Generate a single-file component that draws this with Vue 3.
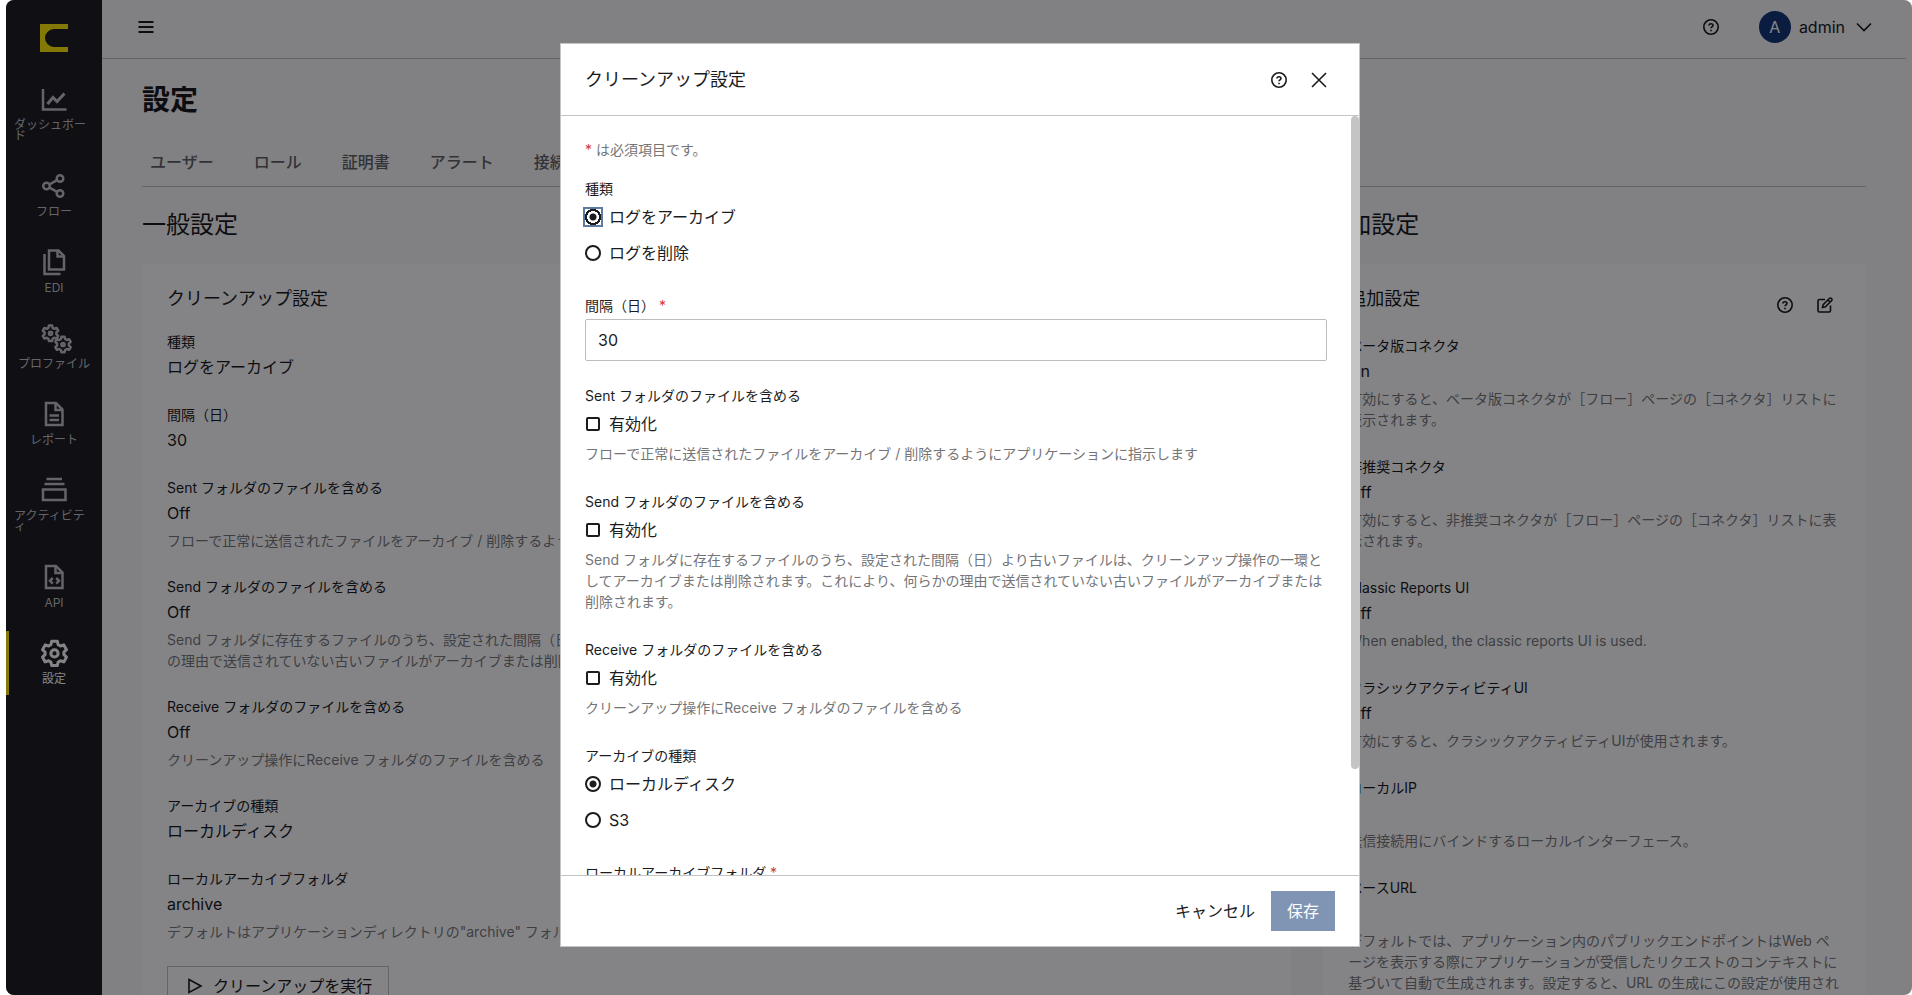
<script setup>
import { ref } from 'vue'

const navItems = [
  { id: 'dashboard', label: 'ダッシュボード' },
  { id: 'flow', label: 'フロー' },
  { id: 'edi', label: 'EDI' },
  { id: 'profile', label: 'プロファイル' },
  { id: 'report', label: 'レポート' },
  { id: 'activity', label: 'アクティビティ' },
  { id: 'api', label: 'API' },
  { id: 'settings', label: '設定', active: true }
]

const tabs = ['ユーザー', 'ロール', '証明書', 'アラート', '接続']

const cleanup = [
  { label: '種類', value: 'ログをアーカイブ' },
  { label: '間隔（日）', value: '30' },
  {
    label: 'Sent フォルダのファイルを含める',
    value: 'Off',
    desc: 'フローで正常に送信されたファイルをアーカイブ / 削除するようにアプリケーションに指示します'
  },
  {
    label: 'Send フォルダのファイルを含める',
    value: 'Off',
    desc: 'Send フォルダに存在するファイルのうち、設定された間隔（日）より古いファイルは、クリーンアップ操作の一環としてアーカイブまたは削除されます。これにより、何らかの理由で送信されていない古いファイルがアーカイブまたは削除されます。'
  },
  {
    label: 'Receive フォルダのファイルを含める',
    value: 'Off',
    desc: 'クリーンアップ操作にReceive フォルダのファイルを含める'
  },
  { label: 'アーカイブの種類', value: 'ローカルディスク' },
  {
    label: 'ローカルアーカイブフォルダ',
    value: 'archive',
    desc: 'デフォルトはアプリケーションディレクトリの"archive" フォルダです。'
  }
]

const extra = [
  {
    label: 'ベータ版コネクタ',
    value: 'On',
    desc: '有効にすると、ベータ版コネクタが［フロー］ページの［コネクタ］リストに表示されます。'
  },
  {
    label: '非推奨コネクタ',
    value: 'Off',
    desc: '有効にすると、非推奨コネクタが［フロー］ページの［コネクタ］リストに表示されます。'
  },
  { label: 'Classic Reports UI', value: 'Off', desc: 'When enabled, the classic reports UI is used.' },
  {
    label: 'クラシックアクティビティUI',
    value: 'Off',
    desc: '有効にすると、クラシックアクティビティUIが使用されます。'
  },
  { label: 'ローカルIP', value: '', desc: '送信接続用にバインドするローカルインターフェース。' },
  {
    label: 'ベースURL',
    value: '',
    desc: 'デフォルトでは、アプリケーション内のパブリックエンドポイントはWeb ページを表示する際にアプリケーションが受信したリクエストのコンテキストに基づいて自動で生成されます。設定すると、URL の生成にこの設定が使用されます。'
  }
]

const checks = [
  {
    id: 'sent',
    label: 'Sent フォルダのファイルを含める',
    desc: 'フローで正常に送信されたファイルをアーカイブ / 削除するようにアプリケーションに指示します'
  },
  {
    id: 'send',
    label: 'Send フォルダのファイルを含める',
    desc: 'Send フォルダに存在するファイルのうち、設定された間隔（日）より古いファイルは、クリーンアップ操作の一環としてアーカイブまたは削除されます。これにより、何らかの理由で送信されていない古いファイルがアーカイブまたは削除されます。'
  },
  {
    id: 'receive',
    label: 'Receive フォルダのファイルを含める',
    desc: 'クリーンアップ操作にReceive フォルダのファイルを含める'
  }
]

const enabled = ref([])
const kind = ref('archive')
const days = ref('30')
const store = ref('local')
const folder = ref('')
</script>

<template>
  <div class="frame">
    <nav class="sidebar">
      <svg class="logo" viewBox="0 0 28 28" aria-hidden="true">
        <path d="M0 0H28V5H14A9 9 0 0 0 14 23H28V28H0Z" fill="#ffe600" />
      </svg>
      <a v-for="item in navItems" :key="item.id" href="#" class="nav-item" :class="{ active: item.active }">
        <svg class="nav-icon" viewBox="0 0 28 28" fill="none" stroke="currentColor" stroke-width="2.500" aria-hidden="true">
          <template v-if="item.id === 'dashboard'">
            <path d="M3 4V24.500H26.500" />
            <path d="M7.500 19L13 12.500L17 16.500L24.500 8.500" stroke-width="3" />
          </template>
          <template v-else-if="item.id === 'flow'">
            <circle cx="6.500" cy="14" r="3.300" />
            <circle cx="20" cy="6.500" r="3.300" />
            <circle cx="20" cy="21.500" r="3.300" />
            <path d="M9.600 12.300L17 8.200M9.600 15.700L17 19.800" />
          </template>
          <template v-else-if="item.id === 'edi'">
            <path d="M9 2.500H18.500L24 8V21.500H9Z" />
            <path d="M17.500 3V8.500H23.500" />
            <path d="M4.500 6V26H20.500" />
          </template>
          <template v-else-if="item.id === 'profile'">
            <path
              d="M8.900 1.500h3.200l.5 2.300 1.700 1 2.300-.8 1.600 2.700-1.800 1.600v2l1.800 1.600-1.600 2.700-2.300-.8-1.700 1-.5 2.300H8.900l-.5-2.300-1.700-1-2.300.8-1.600-2.700 1.800-1.600v-2L2.800 6.700 4.400 4l2.300.8 1.700-1Z"
              stroke-linejoin="round"
            />
            <circle cx="10.500" cy="9.300" r="1.600" />
            <path
              d="M21.400 12.700h3.200l.5 2.300 1.700 1 2.300-.8 1.600 2.700-1.800 1.600v2l1.800 1.600-1.600 2.700-2.300-.8-1.700 1-.5 2.300h-3.200l-.5-2.300-1.700-1-2.300.8-1.600-2.700 1.800-1.600v-2l-1.800-1.600 1.600-2.700 2.300.8 1.700-1Z"
              stroke-linejoin="round"
            />
            <circle cx="23" cy="20.500" r="1.600" />
          </template>
          <template v-else-if="item.id === 'report'">
            <path d="M6 3H16L22.500 9.500V25H6Z" />
            <path d="M15.500 3V10H22.500M9.500 15.500H19M9.500 20H19" />
          </template>
          <template v-else-if="item.id === 'activity'">
            <path d="M6.500 3H22M4.500 8H24.500M3 13.500H25.500V24H3Z" />
          </template>
          <template v-else-if="item.id === 'api'">
            <path d="M6 3H16L22.500 9.500V25H6Z" />
            <path d="M15.500 3V10H22.500M12.800 15L10 17.800L12.800 20.600M16.200 15L19 17.800L16.200 20.600" />
          </template>
          <template v-else>
            <path
              d="M11.700 2.200h5.600l.8 3.500 2.300 1.300 3.400-1.100 2.700 4.800-2.600 2.400v2.600l2.600 2.400-2.700 4.800-3.400-1.100-2.300 1.300-.8 3.500h-5.600l-.8-3.500-2.300-1.300-3.400 1.100-2.700-4.800 2.600-2.400v-2.600l-2.600-2.400 2.700-4.800 3.400 1.100 2.300-1.300Z"
              stroke-width="3"
              stroke-linejoin="round"
            />
            <circle cx="14.500" cy="14.400" r="3.600" stroke-width="3" />
          </template>
        </svg>
        <span class="nav-label">{{ item.label }}</span>
      </a>
    </nav>

    <div class="page">
      <header class="topbar">
        <button type="button" class="icon-btn" aria-label="メニュー">
          <svg width="16" height="16" viewBox="0 0 16 16" stroke="currentColor" stroke-width="2" aria-hidden="true">
            <path d="M0.500 3H15.500M0.500 8H15.500M0.500 13H15.500" />
          </svg>
        </button>
        <div class="account">
          <button type="button" class="icon-btn" aria-label="ヘルプ">
            <svg width="16" height="16" viewBox="0 0 16 16" fill="none" stroke="currentColor" stroke-width="1.600" aria-hidden="true">
              <circle cx="8" cy="8" r="7.200" />
              <path d="M6 6.500C6 4.200 10 4.200 10 6.500C10 7.900 8 7.900 8 9.300M8 10.700V12.200" />
            </svg>
          </button>
          <button type="button" class="user">
            <span class="avatar">A</span>
            <span>admin</span>
            <svg class="chevron" width="16" height="16" viewBox="0 0 16 16" fill="none" stroke="currentColor" stroke-width="1.600" aria-hidden="true">
              <path d="M1 4.500L8 11.500L15 4.500" />
            </svg>
          </button>
        </div>
      </header>

      <main class="content">
        <h1>設定</h1>
        <div class="tabs">
          <a v-for="tab in tabs" :key="tab" href="#">{{ tab }}</a>
        </div>
        <div class="columns">
          <section>
            <h2>一般設定</h2>
            <div class="card">
              <h3>クリーンアップ設定</h3>
              <dl>
                <div v-for="row in cleanup" :key="row.label" class="entry">
                  <dt>{{ row.label }}</dt>
                  <dd class="value">{{ row.value }}</dd>
                  <dd v-if="row.desc" class="desc">{{ row.desc }}</dd>
                </div>
              </dl>
              <button type="button" class="run">
                <svg width="16" height="16" viewBox="0 0 16 16" fill="none" stroke="currentColor" stroke-width="1.600" aria-hidden="true">
                  <path d="M2 1.500L14 8L2 14.500Z" />
                </svg>
                クリーンアップを実行
              </button>
            </div>
          </section>
          <section class="side">
            <h2>追加設定</h2>
            <div class="card wide-gap">
              <div class="card-head">
                <h3>追加設定</h3>
                <div class="card-tools">
                  <button type="button" class="icon-btn" aria-label="ヘルプ">
                    <svg width="16" height="16" viewBox="0 0 16 16" fill="none" stroke="currentColor" stroke-width="1.600" aria-hidden="true">
                      <circle cx="8" cy="8" r="7.200" />
                      <path d="M6 6.500C6 4.200 10 4.200 10 6.500C10 7.900 8 7.900 8 9.300M8 10.700V12.200" />
                    </svg>
                  </button>
                  <button type="button" class="icon-btn" aria-label="編集">
                    <svg width="16" height="16" viewBox="0 0 16 16" fill="none" stroke="currentColor" stroke-width="1.600" aria-hidden="true">
                      <path d="M8 2.500H2.500Q1 2.500 1 4V13.500Q1 15 2.500 15H12Q13.500 15 13.500 13.500V8.500" />
                      <path d="M5.500 10.500L6.200 7.600L12.500 1.300Q13.500 0.600 14.500 1.500Q15.400 2.500 14.700 3.500L8.400 9.800ZM11 3L13 5" />
                    </svg>
                  </button>
                </div>
              </div>
              <dl>
                <div v-for="row in extra" :key="row.label" class="entry">
                  <dt>{{ row.label }}</dt>
                  <dd class="value">{{ row.value }}</dd>
                  <dd class="desc">{{ row.desc }}</dd>
                </div>
              </dl>
            </div>
          </section>
        </div>
      </main>
    </div>

    <div class="overlay">
      <form class="modal" role="dialog" aria-labelledby="modal-title" @submit.prevent>
        <div class="modal-head">
          <h2 id="modal-title">クリーンアップ設定</h2>
          <button type="button" class="icon-btn" aria-label="ヘルプ">
            <svg width="16" height="16" viewBox="0 0 16 16" fill="none" stroke="currentColor" stroke-width="1.600" aria-hidden="true">
              <circle cx="8" cy="8" r="7.200" />
              <path d="M6 6.500C6 4.200 10 4.200 10 6.500C10 7.900 8 7.900 8 9.300M8 10.700V12.200" />
            </svg>
          </button>
          <button type="button" class="icon-btn" aria-label="閉じる">
            <svg width="16" height="16" viewBox="0 0 16 16" stroke="currentColor" stroke-width="1.600" aria-hidden="true">
              <path d="M1 1L15 15M15 1L1 15" />
            </svg>
          </button>
        </div>

        <div class="modal-body">
          <div class="scroller">
            <p class="note"><span class="req">*</span> は必須項目です。</p>

            <fieldset class="field radios">
              <legend>種類</legend>
              <label><input v-model="kind" class="focused" type="radio" name="kind" value="archive" />ログをアーカイブ</label>
              <label><input v-model="kind" type="radio" name="kind" value="delete" />ログを削除</label>
            </fieldset>

            <div class="field entry-field">
              <label class="label" for="days">間隔（日） <span class="req">*</span></label>
              <input id="days" v-model="days" class="text" type="text" />
            </div>

            <fieldset v-for="c in checks" :key="c.id" class="field">
              <legend>{{ c.label }}</legend>
              <label class="choice"><input v-model="enabled" type="checkbox" :value="c.id" />有効化</label>
              <p class="hint">{{ c.desc }}</p>
            </fieldset>

            <fieldset class="field radios">
              <legend>アーカイブの種類</legend>
              <label><input v-model="store" type="radio" name="store" value="local" />ローカルディスク</label>
              <label><input v-model="store" type="radio" name="store" value="s3" />S3</label>
            </fieldset>

            <div class="field entry-field">
              <label class="label" for="folder">ローカルアーカイブフォルダ <span class="req">*</span></label>
              <input id="folder" v-model="folder" class="text" type="text" />
            </div>
          </div>
          <div class="track"><div class="thumb"></div></div>
        </div>

        <div class="modal-foot">
          <button type="button" class="cancel">キャンセル</button>
          <button type="submit" class="save">保存</button>
        </div>
      </form>
    </div>
  </div>
</template>

<style>
body {
  background: #fff;
}
</style>

<style scoped>
* {
  box-sizing: border-box;
}
.frame {
  position: relative;
  display: flex;
  height: 100vh;
  margin-left: 6px;
  overflow: hidden;
  border-radius: 8px;
  background: #f8f8f9;
  color: #111114;
  font-family: Inter, "Noto Sans CJK JP", sans-serif;
  font-size: 16px;
  line-height: 24px;
}
button {
  font: inherit;
  color: inherit;
  padding: 0;
  border: 0;
  background: none;
}
a {
  color: inherit;
  text-decoration: none;
}
h1, h2, h3, p, dl, dd, fieldset {
  margin: 0;
}
svg {
  display: block;
}

.sidebar {
  flex: none;
  display: flex;
  flex-direction: column;
  gap: 12px;
  width: 96px;
  background: #15151a;
}
.logo {
  width: 28px;
  height: 28px;
  margin: 24px auto 13px 34px;
}
.nav-item {
  display: flex;
  flex-direction: column;
  align-items: center;
  padding: 8px 8px 11px 5px;
  border-left: 3px solid transparent;
  color: #c0c0c4;
}
.nav-item.active {
  border-left-color: #ffe600;
  color: #fff;
}
.nav-icon {
  width: 28px;
  height: 28px;
  margin-bottom: 6px;
  overflow: visible;
}
.nav-label {
  font-size: 12px;
  line-height: 11px;
  line-break: anywhere;
}

.page {
  flex: 1;
  min-width: 0;
}
.topbar {
  display: flex;
  justify-content: space-between;
  align-items: center;
  height: 59px;
  margin-right: 6px;
  padding: 0 34px 4px 36px;
  border-bottom: 1px solid #bebec2;
}
.account {
  display: flex;
  align-items: center;
  gap: 40px;
}
.user {
  display: flex;
  align-items: center;
  gap: 8px;
}
.avatar {
  width: 32px;
  height: 32px;
  border-radius: 50%;
  background: #0a2f70;
  color: #fff;
  line-height: 32px;
  text-align: center;
}
.chevron {
  margin-left: 3px;
}
.content {
  padding: 21px 46px 0 40px;
}
h1 {
  font-size: 28px;
  line-height: 40px;
}
.tabs {
  display: flex;
  gap: 40px;
  margin-top: 20px;
  padding: 10px 8px 12px;
  border-bottom: 1px solid #bebec2;
  color: #5c5c60;
  font-weight: 500;
}
.columns {
  display: grid;
  grid-template-columns: 2fr 1fr;
  padding-top: 20px;
}
.side {
  padding-left: 32px;
}
h2 {
  font-size: 24px;
  font-weight: 400;
  line-height: 36px;
}
.card {
  margin-top: 21px;
  padding: 21px 25px;
  border-radius: 4px;
  background: #fff;
}
.card-head {
  display: flex;
  justify-content: space-between;
  gap: 24px;
  margin-bottom: 3px;
}
.card-tools {
  display: flex;
  gap: 24px;
  padding: 12px 8px 0 0;
}
h3 {
  font-size: 18px;
  font-weight: 400;
  line-height: 27px;
}
dl {
  display: grid;
  gap: 25px;
  padding-top: 19px;
}
.wide-gap dl {
  gap: 26px;
}
dt {
  font-size: 14px;
  line-height: 21px;
}
.value {
  margin-top: 3px;
  min-height: 24px;
}
.desc {
  margin-top: 5px;
}
.desc, .hint, .note {
  color: #757578;
  font-size: 14px;
  line-height: 21px;
}
.run {
  display: flex;
  align-items: center;
  gap: 10px;
  height: 40px;
  margin-top: 24px;
  padding: 0 16px 0 19px;
  border: 1px solid #bebec2;
}

.overlay {
  position: absolute;
  inset: 0;
  display: flex;
  justify-content: center;
  padding: 43px 0 48px 2px;
  background: rgba(10, 10, 14, 0.5);
}
.modal {
  display: flex;
  flex-direction: column;
  width: 800px;
  border: 1px solid #c4c4c4;
  background: #fff;
  color: #1c1c1e;
}
.modal-head {
  display: flex;
  align-items: center;
  gap: 24px;
  padding: 22px 32px 22px 24px;
  border-bottom: 1px solid #c4c4c4;
}
.modal-head h2 {
  flex: 1;
  font-size: 18px;
  line-height: 27px;
}
.modal-body {
  flex: 1;
  display: flex;
  min-height: 0;
}
.scroller {
  flex: 1;
  padding: 23px 24px 24px;
  overflow: auto;
  scrollbar-width: none;
}
.track {
  width: 8px;
}
.thumb {
  height: 86%;
  border-radius: 4px;
  background: #c4c4c4;
}
.note {
  margin-bottom: 18px;
}
.req {
  color: #d03a3a;
}
.field {
  min-width: 0;
  margin-bottom: 27px;
  padding: 0;
  border: 0;
}
.radios {
  padding-bottom: 3px;
}
.entry-field {
  margin-bottom: 24px;
}
legend, .label {
  display: block;
  padding: 0;
  font-size: 14px;
  line-height: 21px;
}
.radios label, .choice {
  display: flex;
  align-items: center;
  gap: 8px;
  margin-top: 6px;
}
.radios label + label {
  margin-top: 12px;
}
input[type="radio"], input[type="checkbox"] {
  flex: none;
  appearance: none;
  width: 16px;
  height: 16px;
  margin: 0;
  border: 2px solid #1c1c1e;
  border-radius: 50%;
}
input[type="checkbox"] {
  width: 14px;
  height: 14px;
  margin: 0 1px;
  border-radius: 2px;
}
input[type="radio"]:checked {
  background: radial-gradient(circle, #1c1c1e 3px, transparent 4px);
}
input.focused[type="radio"]:checked {
  border: 0;
  border-radius: 0;
  outline: 2px solid #5b7ba3;
  background: radial-gradient(circle, #1c1c1e 3px, transparent 4px, transparent 6px, #1c1c1e 6px, #1c1c1e 8px, transparent 8px);
}
.hint {
  margin-top: 7px;
}
.text {
  display: block;
  width: 100%;
  height: 42px;
  margin-top: 3px;
  padding: 0 12px;
  border: 1px solid #bcbcbc;
  border-radius: 2px;
  color: inherit;
  font: inherit;
}
.modal-foot {
  display: flex;
  justify-content: flex-end;
  align-items: center;
  gap: 16px;
  padding: 15px 24px;
  border-top: 1px solid #c4c4c4;
}
.save {
  height: 40px;
  padding: 0 16px;
  background: #8094b3;
  color: #fff;
}
</style>
